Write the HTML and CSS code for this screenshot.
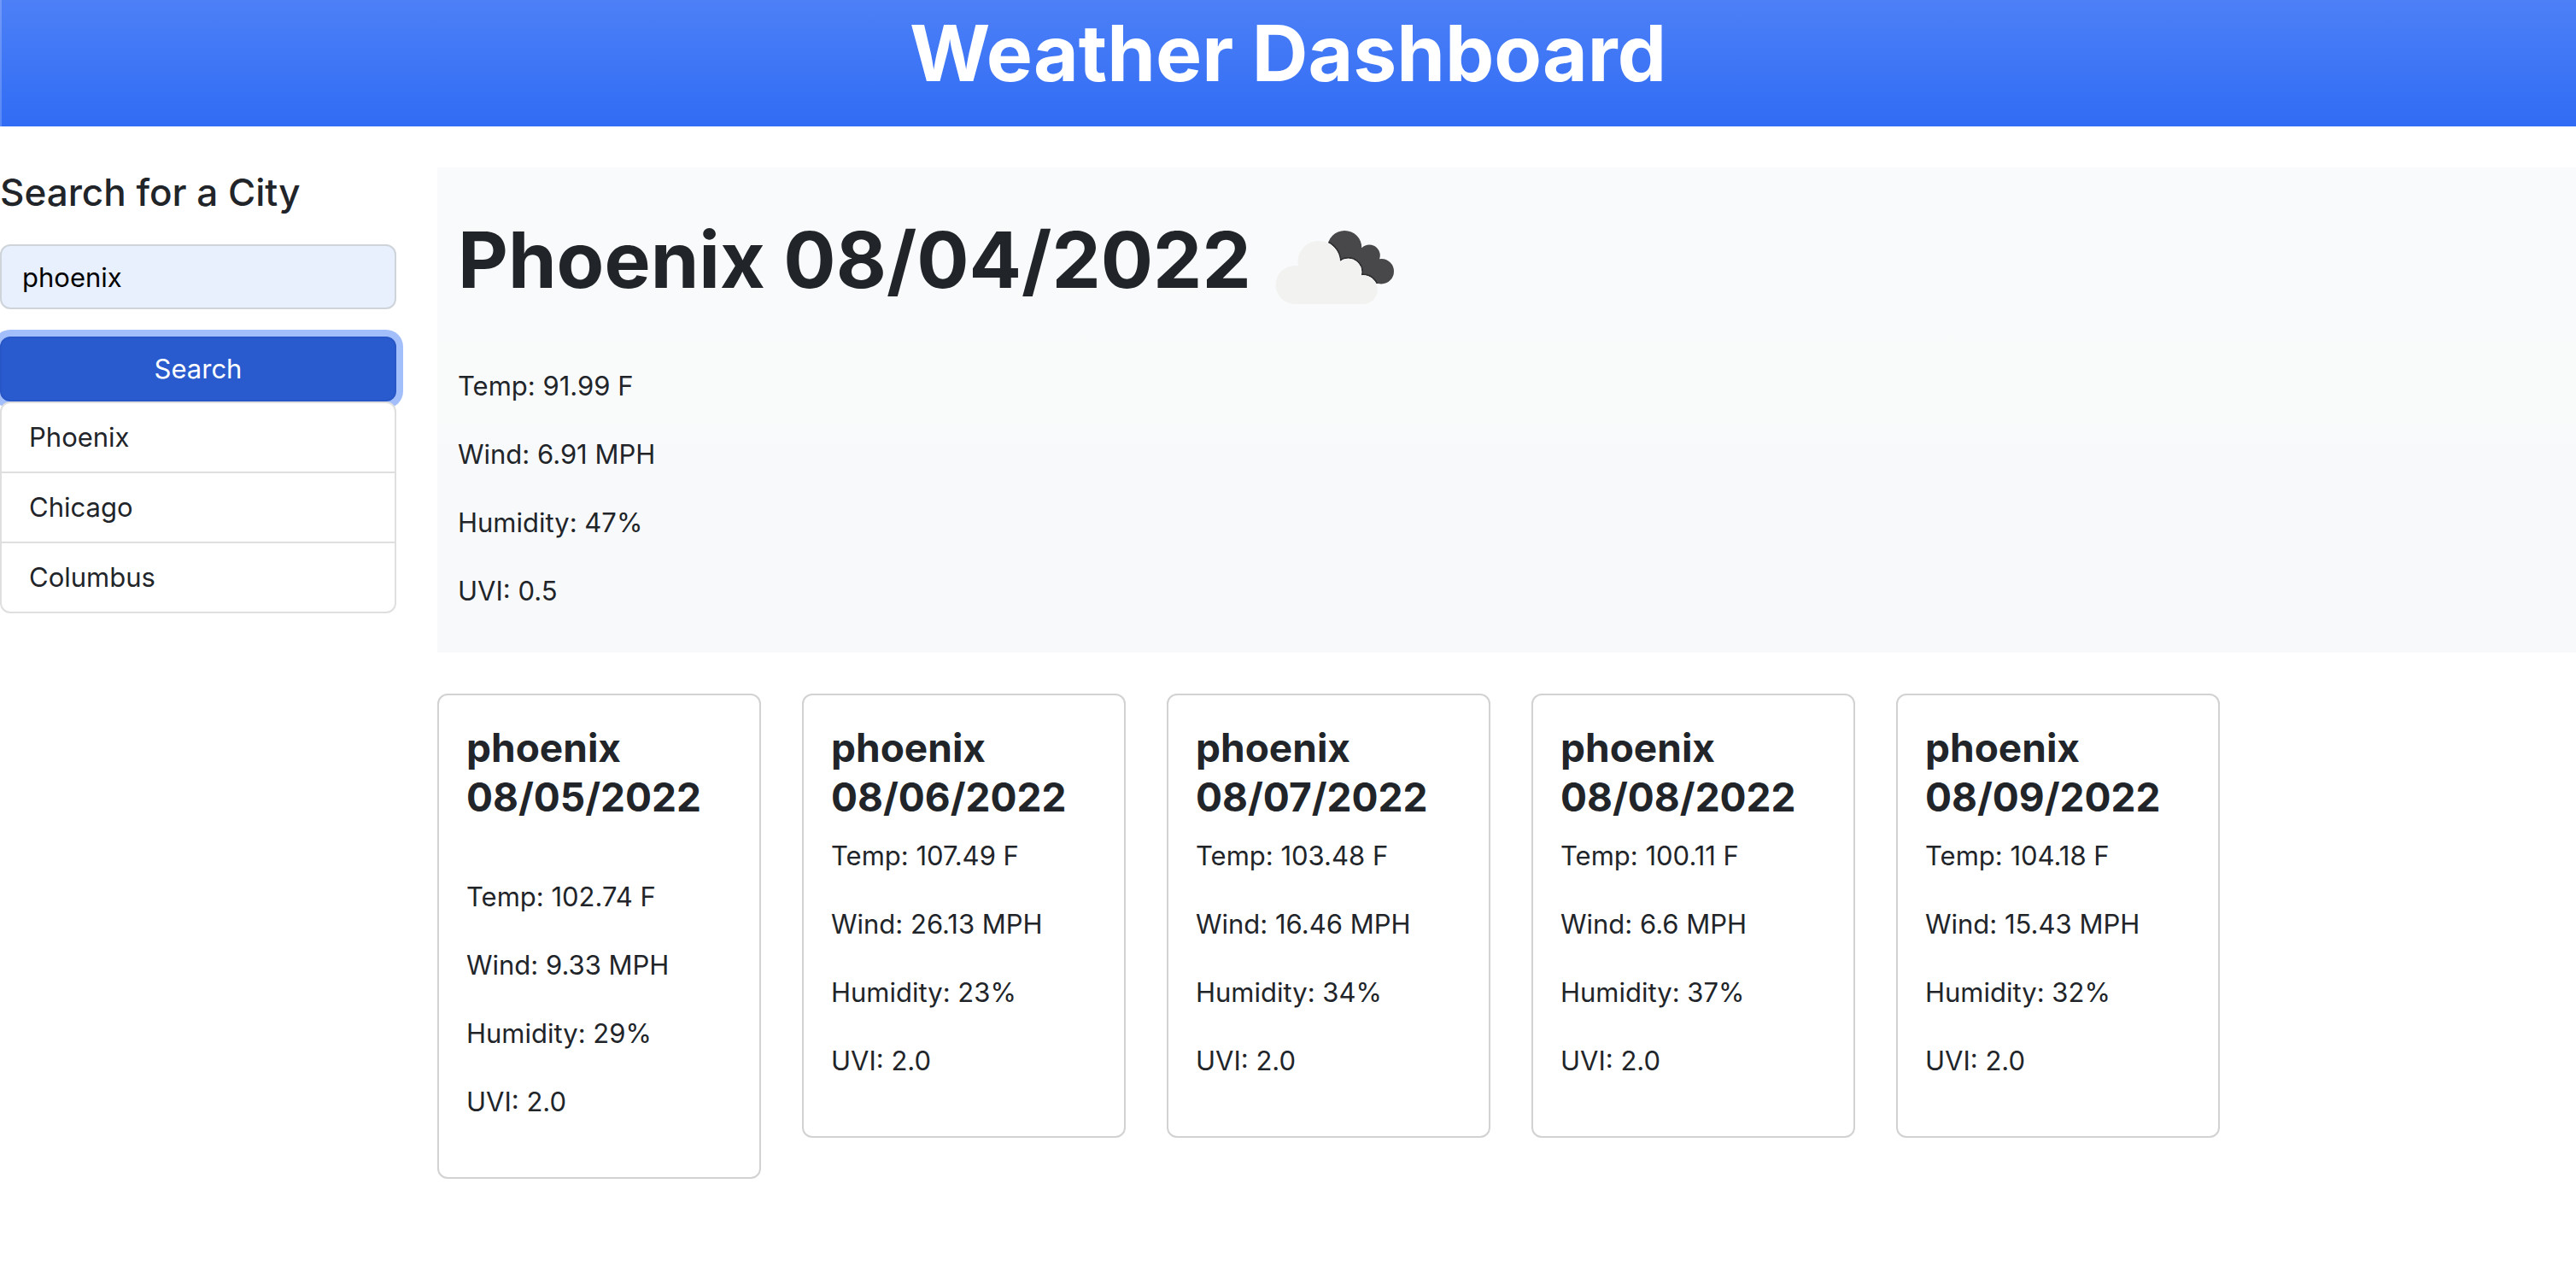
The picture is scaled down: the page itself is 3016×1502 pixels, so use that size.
FILE: index.html
```html
<!DOCTYPE html>
<html lang="en">
<head>
  <meta charset="utf-8">
  <meta name="viewport" content="width=device-width, initial-scale=1">
  <title>Weather Dashboard</title>
  <link rel="stylesheet" href="styles.css">
</head>
<body>
  <header class="page-header">
    <h1 class="page-title">Weather Dashboard</h1>
  </header>

  <div class="layout">
    <aside class="sidebar">
      <form class="search-form">
        <label class="search-label" for="city">Search for a City</label>
        <input class="search-input" id="city" type="text" value="phoenix">
        <button class="search-button" type="button">Search</button>
      </form>
      <ul class="history">
        <li class="history-item">Phoenix</li>
        <li class="history-item">Chicago</li>
        <li class="history-item">Columbus</li>
      </ul>
    </aside>

    <main class="content">
      <section class="current">
        <h2 class="current-title">Phoenix 08/04/2022<svg class="weather-icon" viewBox="0 0 200 200" role="img" aria-label="Broken clouds">
            <defs>
              <g id="front">
                <circle cx="51" cy="121.5" r="22.5"/>
                <circle cx="79" cy="94.5" r="24.5"/>
                <circle cx="113.5" cy="106.5" r="15.5"/>
                <circle cx="131" cy="127.3" r="16.7"/>
                <path d="M51 144V105L79 90l34 12 18 14v28z"/>
              </g>
              <clipPath id="back">
                <circle cx="109.3" cy="78" r="20"/>
                <circle cx="138.3" cy="87" r="12.5"/>
                <circle cx="152.3" cy="105.7" r="14.7"/>
                <path d="M100 78h29l20 14 3 28h-30z"/>
              </clipPath>
            </defs>
            <g clip-path="url(#back)">
              <rect class="cloud-back" width="200" height="200"/>
              <use class="cloud-shade" href="#front"/>
              <use class="cloud-rim" href="#front"/>
            </g>
            <use class="cloud-front" href="#front"/>
          </svg></h2>
        <p class="reading">Temp: 91.99 F</p>
        <p class="reading">Wind: 6.91 MPH</p>
        <p class="reading">Humidity: 47%</p>
        <p class="reading">UVI: 0.5</p>
      </section>

      <section class="forecast">
        <article class="card">
          <h3 class="card-title card-title-first">phoenix 08/05/2022</h3>
          <p class="reading">Temp: 102.74 F</p>
          <p class="reading">Wind: 9.33 MPH</p>
          <p class="reading">Humidity: 29%</p>
          <p class="reading">UVI: 2.0</p>
        </article>
        <article class="card">
          <h3 class="card-title">phoenix 08/06/2022</h3>
          <p class="reading">Temp: 107.49 F</p>
          <p class="reading">Wind: 26.13 MPH</p>
          <p class="reading">Humidity: 23%</p>
          <p class="reading">UVI: 2.0</p>
        </article>
        <article class="card">
          <h3 class="card-title">phoenix 08/07/2022</h3>
          <p class="reading">Temp: 103.48 F</p>
          <p class="reading">Wind: 16.46 MPH</p>
          <p class="reading">Humidity: 34%</p>
          <p class="reading">UVI: 2.0</p>
        </article>
        <article class="card">
          <h3 class="card-title">phoenix 08/08/2022</h3>
          <p class="reading">Temp: 100.11 F</p>
          <p class="reading">Wind: 6.6 MPH</p>
          <p class="reading">Humidity: 37%</p>
          <p class="reading">UVI: 2.0</p>
        </article>
        <article class="card">
          <h3 class="card-title">phoenix 08/09/2022</h3>
          <p class="reading">Temp: 104.18 F</p>
          <p class="reading">Wind: 15.43 MPH</p>
          <p class="reading">Humidity: 32%</p>
          <p class="reading">UVI: 2.0</p>
        </article>
      </section>
    </main>
  </div>
</body>
</html>
```
FILE: styles.css
```css
*, *::before, *::after {
  box-sizing: border-box;
}

body {
  margin: 0;
  background: #fff;
  color: #212529;
  font-family: Inter, "Liberation Sans", sans-serif;
  font-size: 31px;
  line-height: 48px;
}

h1, h2, h3, p, ul {
  margin: 0;
  padding: 0;
}

.page-header {
  padding-bottom: 24px;
  background: linear-gradient(#4d80f7, #306cf4);
  box-shadow: inset 2px 0 rgba(255, 255, 255, 0.2);
  text-align: center;
}

.page-title {
  color: #fff;
  font-size: 91px;
  font-weight: 700;
  line-height: 124px;
}

.layout {
  display: flex;
  gap: 48px;
  padding-top: 48px;
}

.sidebar {
  flex: 0 0 464px;
}

.search-form {
  display: flex;
  flex-direction: column;
}

.search-label {
  margin-bottom: 32px;
  font-size: 44px;
  font-weight: 500;
  line-height: 58px;
}

.search-input {
  width: 100%;
  height: 76px;
  margin-bottom: 32px;
  padding: 0 24px;
  border: 2px solid #ced4da;
  border-radius: 12px;
  background: #e8f0fe;
  color: #000;
  font: inherit;
}

.search-button {
  height: 76px;
  padding: 0 24px;
  border: 2px solid #2757c6;
  border-radius: 12px;
  background: #2a5bce;
  box-shadow: 0 0 0 8px #a2befb;
  color: #fff;
  font: inherit;
}

.history {
  position: relative;
  border: 2px solid #dfdfdf;
  border-radius: 12px;
  background: #fff;
  list-style: none;
}

.history-item {
  padding: 16px 32px;
}

.history-item + .history-item {
  border-top: 2px solid #dfdfdf;
}

.content {
  flex: 1;
  min-width: 0;
}

.current {
  padding: 16px 24px;
  background: linear-gradient(#f9fafc, #f9fafa 50%, #f8f9fb 60%);
}

.current-title {
  margin-bottom: 16px;
  font-size: 91px;
  font-weight: 700;
  line-height: 124px;
}

.weather-icon {
  width: 200px;
  height: 200px;
  vertical-align: middle;
}

.cloud-back {
  fill: #48484a;
}

.cloud-shade {
  fill: #2e2e30;
  stroke: #2e2e30;
  stroke-width: 4;
}

.cloud-rim {
  fill: #f9fafc;
  stroke: #f9fafc;
  stroke-width: 1;
}

.cloud-front {
  fill: #f2f2f1;
}

.reading {
  margin-bottom: 32px;
}

.forecast {
  display: grid;
  grid-template-columns: repeat(5, minmax(0, 379px));
  align-items: start;
  gap: 48px;
  padding: 48px 0;
}

.card {
  padding: 32px;
  border: 2px solid #d2d2d2;
  border-radius: 12px;
  background: #fff;
}

.card-title {
  margin-bottom: 16px;
  font-size: 46px;
  font-weight: 700;
  line-height: 58px;
}

.card-title-first {
  margin-bottom: 64px;
}
```
